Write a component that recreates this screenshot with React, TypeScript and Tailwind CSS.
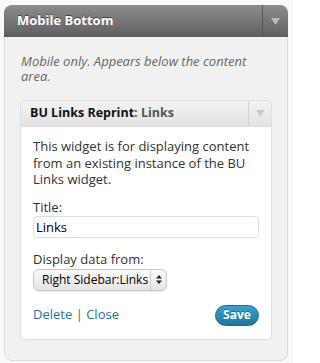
const font = { fontFamily: '"Open Sans", "DejaVu Sans", sans-serif' }

function Caret() {
  return (
    <svg width="9" height="7" viewBox="0 0 9 7">
      <polygon points="0,0 9,0 4.5,7" fill="currentColor" />
    </svg>
  )
}

export default function App() {
  return (
    <div className="min-h-[363px] w-[293px] bg-[#f9f9f9] pt-[5px] pl-[4px] text-[13px]" style={font}>
      <div className="w-[284px] rounded-[8px] border border-[#dcdcdc] bg-[#f1f1f1] pb-[20px]">
        {/* Cabecera */}
        <div className="-mx-px -mt-px flex h-[32px] rounded-t-[8px] bg-gradient-to-b from-[#8d8d8d] to-[#5f5f5f]">
          <div className="flex flex-1 items-center pl-[13px] text-[13px] font-bold text-white [text-shadow:0_-1px_0_#3f3f3f]">
            Mobile Bottom
          </div>
          <div className="flex w-[26px] items-center justify-center border-l border-[#555] text-[#bbb]">
            <Caret />
          </div>
        </div>

        <p className="px-[16px] pt-[17px] text-[13px] italic leading-[15px] text-[#666]">
          Mobile only. Appears below the content area.
        </p>

        {/* Widget */}
        <div className="mx-[15px] mt-[16px] rounded-[5px] border border-[#dfdfdf] bg-white">
          <div className="flex h-[26px] rounded-t-[5px] border-b border-[#dfdfdf] bg-gradient-to-b from-[#f3f3f3] to-[#e3e3e3]">
            <div className="flex flex-1 items-center pl-[9px] text-[12.5px] font-bold text-[#111]">
              <span>
                BU Links Reprint<span className="text-[#555]">: Links</span>
              </span>
            </div>
            <div className="flex w-[23px] items-center justify-center border-l border-[#d4d4d4] text-[#ccc]">
              <Caret />
            </div>
          </div>

          <div className="px-[12px] pb-[13px] pt-[11px] text-[#333]">
            <p className="leading-[16.5px]">
              This widget is for displaying content from an existing instance of the BU Links widget.
            </p>

            <label className="mt-[11px] block leading-[16px]">Title:</label>
            <input
              readOnly
              value="Links"
              className="mt-[1px] h-[22px] w-[226px] rounded-[4px] border border-[#dfdfdf] bg-white px-[2px] text-[13px] text-black outline-none"
            />

            <label className="mt-[13px] block leading-[16px]">Display data from:</label>
            <div className="mt-[2px] flex h-[22px] w-[134px] items-center rounded-[6px] border border-[#c9c9c9] bg-gradient-to-b from-[#fafafa] to-[#e4e4e4] shadow-[0_1px_1px_rgba(0,0,0,0.1)]">
              <span className="flex-1 pl-[8px] text-[12px] text-black">Right Sidebar:Links</span>
              <span className="flex h-full w-[16px] items-center justify-center border-l border-[#cfcfcf]">
                <svg width="6" height="9" viewBox="0 0 6 9">
                  <polygon points="3,0 6,3.5 0,3.5" fill="#222" />
                  <polygon points="0,5.5 6,5.5 3,9" fill="#222" />
                </svg>
              </span>
            </div>

            <div className="mt-[14px] flex items-center justify-between">
              <div className="text-[13px]">
                <a className="text-[#21759b]">Delete</a>
                <span className="text-[#666]"> | </span>
                <a className="text-[#21759b]">Close</a>
              </div>
              <button className="h-[21px] w-[44px] rounded-full border border-[#1e6a8d] bg-gradient-to-b from-[#3ba2d2] to-[#21759b] text-[12px] font-bold text-white [text-shadow:0_-1px_0_rgba(0,0,0,0.3)]">
                Save
              </button>
            </div>
          </div>
        </div>
      </div>
    </div>
  )
}
